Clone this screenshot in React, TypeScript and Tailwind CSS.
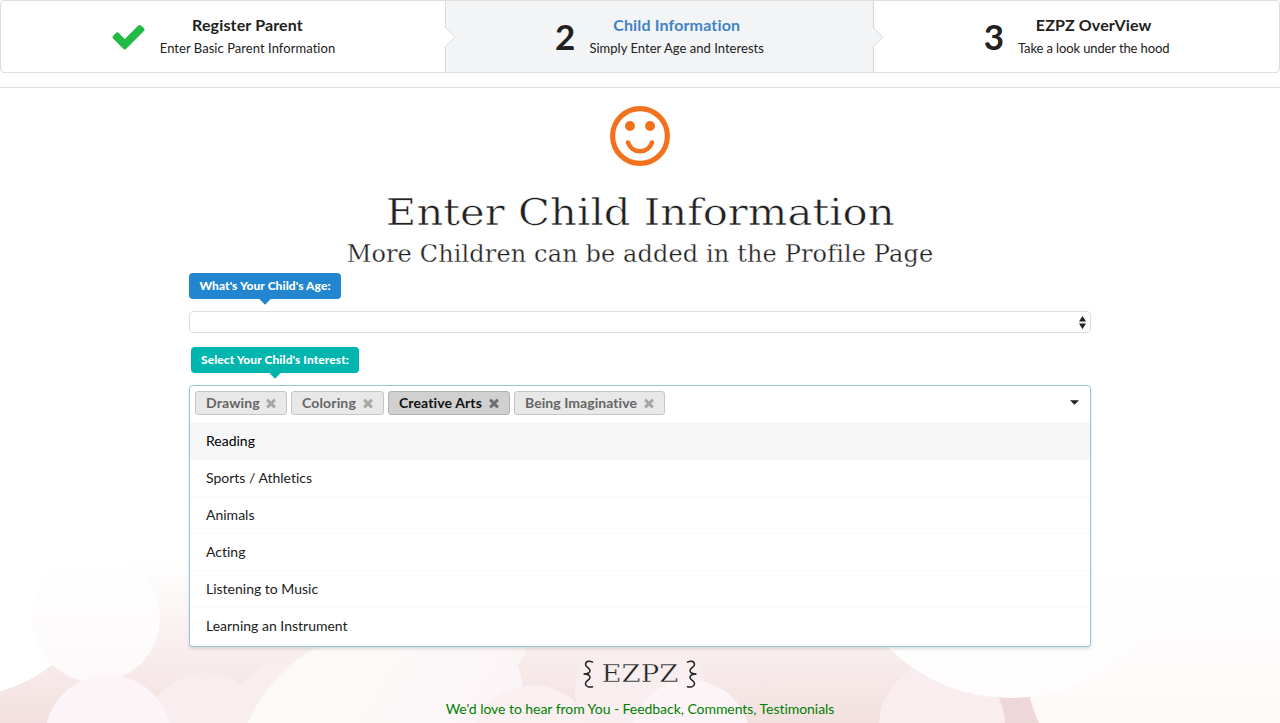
import React from "react";

const TIMES =
  "M1490 1322q0 40-28 68l-136 136q-28 28-68 28t-68-28l-294-294-294 294q-28 28-68 28t-68-28l-136-136q-28-28-28-68t28-68l294-294-294-294q-28-28-28-68t28-68l136-136q28-28 68-28t68 28l294 294 294-294q28-28 68-28t68 28l136 136q28 28 28 68t-28 68l-294 294 294 294q28 28 28 68z";
const CHECK =
  "M1671 566q0 40-28 68l-724 724-136 136q-28 28-68 28t-68-28l-136-136-362-362q-28-28-28-68t28-68l136-136q28-28 68-28t68 28l294 295 656-657q28-28 68-28t68 28l136 136q28 28 28 68z";

function Backdrop() {
  return (
    <svg className="absolute inset-0 h-full w-full" viewBox="0 0 1280 723">
      <defs>
        <linearGradient id="rose" x1="0" y1="560" x2="0" y2="723" gradientUnits="userSpaceOnUse">
          <stop offset="0" stopColor="#ffffff" />
          <stop offset="0.55" stopColor="#f8eeed" />
          <stop offset="1" stopColor="#f3e0e0" />
        </linearGradient>
        <linearGradient id="pale" x1="0" y1="560" x2="0" y2="690" gradientUnits="userSpaceOnUse">
          <stop offset="0" stopColor="#ffffff" />
          <stop offset="1" stopColor="#fdf8fa" />
        </linearGradient>
        <linearGradient id="edge" x1="0" y1="570" x2="0" y2="723" gradientUnits="userSpaceOnUse">
          <stop offset="0" stopColor="#ffffff" />
          <stop offset="1" stopColor="#fdf9f8" />
        </linearGradient>
        <linearGradient id="warm" x1="390" y1="640" x2="520" y2="723" gradientUnits="userSpaceOnUse">
          <stop offset="0" stopColor="#fcf9f8" />
          <stop offset="1" stopColor="#fcf4f7" />
        </linearGradient>
        <linearGradient id="moon" x1="0" y1="560" x2="0" y2="698" gradientUnits="userSpaceOnUse">
          <stop offset="0" stopColor="#ffffff" />
          <stop offset="1" stopColor="#fefcfc" />
        </linearGradient>
      </defs>
      <rect y="560" width="1280" height="163" fill="url(#rose)" />
      <circle cx="-40" cy="550" r="147" fill="#fff" />
      <circle cx="96" cy="618" r="64" fill="url(#pale)" />
      <circle cx="295" cy="719" r="62" fill="#f8eeee" />
      <circle cx="206" cy="735" r="62" fill="#f9eeef" />
      <circle cx="108" cy="738" r="63" fill="#fdf4f8" />
      <circle cx="465" cy="625" r="66" fill="#fbf5f5" />
      <circle cx="396" cy="788" r="162" fill="url(#warm)" />
      <circle cx="435" cy="695" r="88" fill="url(#warm)" />
      <circle cx="533" cy="747" r="62" fill="#faf0f2" />
      <circle cx="640" cy="690" r="65" fill="#f8eeef" />
      <circle cx="690" cy="740" r="60" fill="#fdf4f8" />
      <path d="M980 690h45q6 18 14 33h-59z" fill="#eed7d8" />
      <path d="M1280 560H1090L1010 690h17q4 18 12 33h241z" fill="url(#edge)" />
      <path d="M980 690h48q4 18 11 33h-59z" fill="#eed7d8" />
      <circle cx="942" cy="725" r="63" fill="#f9edef" />
      <circle cx="1010" cy="527" r="171" fill="url(#moon)" />
    </svg>
  );
}

function StepText({ title, text, titleClass, textClass }: { title: string; text: string; titleClass: string; textClass: string }) {
  return (
    <div className="relative -top-px text-center whitespace-nowrap">
      <div className={"text-[16px] leading-[18px] font-bold " + titleClass}>{title}</div>
      <div className={"mt-[7px] text-[13px] leading-[14px] " + textClass}>{text}</div>
    </div>
  );
}

function Arrow({ active }: { active?: boolean }) {
  return (
    <svg className="absolute top-[25px] -right-[11px] z-10" width="12" height="22" viewBox="0 0 12 22">
      <path d="M0 0L11 11L0 22z" fill={active ? "#f3f4f5" : "#fff"} />
      <path d="M0.3 0.5L10.8 11L0.3 21.5" fill="none" stroke="#d9dadb" />
    </svg>
  );
}

function Tag({ name, className }: { name: string; className: string }) {
  return (
    <span className={"flex h-6 items-center justify-between rounded-[3px] border pr-[8px] pb-[2px] pl-[10px] text-[14px] font-bold whitespace-nowrap " + className}>
      {name}
      <svg className="mt-[2px] opacity-50" width="14" height="14" viewBox="0 0 1792 1792" fill="currentColor">
        <path d={TIMES} />
      </svg>
    </span>
  );
}

const options = ["Reading", "Sports / Athletics", "Animals", "Acting", "Listening to Music", "Learning an Instrument"];

export default function App() {
  return (
    <div className="relative h-[723px] w-[1280px] overflow-hidden bg-white font-['Lato',sans-serif] text-[#212121] [font-variant-ligatures:none]">
      <Backdrop />
      <div className="relative flex h-full flex-col">
        <div className="flex h-[73px] shrink-0 rounded-[4px] border border-[#dededf] bg-white">
          <div className="relative flex w-[445px] items-center justify-center gap-[13px] border-r border-[#dededf] pr-px">
            <svg width="37" height="37" viewBox="0 0 1792 1792" fill="#21ba45">
              <path d={CHECK} />
            </svg>
            <StepText title="Register Parent" text="Enter Basic Parent Information" titleClass="tracking-[0.15px]" textClass="tracking-[0.05px]" />
            <Arrow />
          </div>
          <div className="relative flex w-[428px] items-center justify-center gap-[14px] border-r border-[#d4d4d5] bg-[#f3f4f5]">
            <span className="text-[35px] leading-none font-bold">2</span>
            <StepText title="Child Information" text="Simply Enter Age and Interests" titleClass="text-[#4183c4] tracking-[0.15px]" textClass="tracking-[0.03px]" />
            <Arrow active />
          </div>
          <div className="flex flex-1 items-center justify-center gap-[14px]">
            <span className="text-[35px] leading-none font-bold">3</span>
            <StepText title="EZPZ OverView" text="Take a look under the hood" titleClass="tracking-[0.12px]" textClass="tracking-[-0.12px]" />
          </div>
        </div>
        <div className="mt-[14px] h-px shrink-0 bg-[#dedede]" />

        <div className="mt-[18px] flex shrink-0 flex-col items-center">
          <svg width="60" height="60" viewBox="0 0 60 60" fill="#f2711c">
            <circle cx="30" cy="30" r="27.4" fill="none" stroke="#f2711c" strokeWidth="5.2" />
            <circle cx="20" cy="20" r="5" />
            <circle cx="40" cy="20" r="5" />
            <path d="M18 36.5a12.6 12.6 0 0 0 24 0" fill="none" stroke="#f2711c" strokeWidth="4.6" strokeLinecap="round" />
          </svg>
          <h1 className="mt-[22px] h-[48px] scale-x-110 font-['DejaVu_Serif',serif] text-[38px] leading-[48px] whitespace-nowrap [-webkit-text-stroke:0.6px_white]">
            Enter Child Information
          </h1>
          <h2 className="mt-[1px] h-[34px] font-['DejaVu_Serif',serif] text-[24px] leading-[34px] tracking-[0.13px] whitespace-nowrap [-webkit-text-stroke:0.3px_white]">
            More Children can be added in the Profile Page
          </h2>
        </div>

        <div className="mx-auto mt-[2px] w-[902px] shrink-0">
          <div className="relative flex h-[26px] w-[152px] items-center justify-center rounded-[4px] bg-[#2185d0] text-[12px] font-black tracking-[0.07px] whitespace-nowrap text-white">
            What's Your Child's Age:
            <span className="absolute -bottom-1 left-[72px] size-2 rotate-45 bg-[#2185d0]" />
          </div>
          <div className="mt-3 flex h-[22px] items-center justify-end rounded-[4px] border border-[#dedede] bg-white pr-1">
            <svg width="7" height="13" viewBox="0 0 7 13" fill="#212121">
              <path d="M3.5 0L7 5.4H0zM0 7.5h7L3.5 13z" />
            </svg>
          </div>
          <div className="relative mt-[14px] ml-[2px] flex h-[26px] w-[168px] items-center justify-center rounded-[4px] bg-[#00b5ad] text-[12px] font-black tracking-[0.07px] whitespace-nowrap text-white">
            Select Your Child's Interest:
            <span className="absolute -bottom-1 left-[80px] size-2 rotate-45 bg-[#00b5ad]" />
          </div>
          <div className="mt-3 h-[262px] overflow-hidden rounded-[4px] border border-[#96c8da] bg-white shadow-[0_2px_3px_0_rgba(34,36,38,0.15)]">
            <div className="flex h-9 items-start gap-1 pt-[5px] pl-[5px]">
              <Tag name="Drawing" className="w-[92px] border-[#c6c6c6] bg-[#e8e8e8] tracking-[0.15px] text-[#666]" />
              <Tag name="Coloring" className="w-[93px] border-[#c6c6c6] bg-[#e8e8e8] tracking-[0.15px] text-[#666]" />
              <Tag name="Creative Arts" className="w-[122px] border-[#b3b3b3] bg-[#d0d0d0] tracking-[0.12px] text-[#111]" />
              <Tag name="Being Imaginative" className="w-[151px] border-[#c6c6c6] bg-[#e8e8e8] tracking-[0.06px] text-[#666]" />
              <svg className="mt-[9px] mr-[11px] ml-auto" width="9" height="5" viewBox="0 0 8 4" fill="#212121">
                <path d="M0 0h8L4 4z" />
              </svg>
            </div>
            {options.map((o, i) => (
              <div
                key={o}
                className={
                  i === 0
                    ? "flex h-[38px] items-center bg-[#f7f7f7] pb-[2px] pl-4 text-[14px] text-black"
                    : "flex h-[37px] items-center border-b border-[#fafafa] pb-[2px] pl-4 text-[14px]"
                }
              >
                {o}
              </div>
            ))}
          </div>
        </div>

        <div className="mt-[9px] flex shrink-0 flex-col items-center">
          <div className="flex h-9 items-center gap-[8px] whitespace-nowrap">
            <svg width="11" height="28" viewBox="0 0 11 28" fill="none" stroke="#212121" strokeWidth="1.5">
              <path d="M10 2.500C8 0.500 3 0.500 2.500 4C2 7.500 7 7.500 7 10.500C7 13 4.500 14 0.500 14C4.500 14 7 15 7 17.500C7 20.500 2 20.500 2.500 24C3 27.500 8 27.500 10 26.500" />
            </svg>
            <span className="mx-[3px] scale-x-110 font-['DejaVu_Serif',serif] text-[25px] leading-9 [-webkit-text-stroke:0.4px_#fbf2f4]">EZPZ</span>
            <svg width="11" height="28" viewBox="0 0 11 28" fill="none" stroke="#212121" strokeWidth="1.5">
              <path d="M1 2.500C3 0.500 8 0.500 8.500 4C9 7.500 4 7.500 4 10.500C4 13 6.500 14 10.500 14C6.500 14 4 15 4 17.500C4 20.500 9 20.500 8.500 24C8 27.500 3 27.500 1 26.500" />
            </svg>
          </div>
          <div className="mt-[7px] text-[14px] leading-5 tracking-[-0.05px] whitespace-nowrap text-[#008000]">
            We'd love to hear from You - Feedback, Comments, Testimonials
          </div>
        </div>
      </div>
    </div>
  );
}
